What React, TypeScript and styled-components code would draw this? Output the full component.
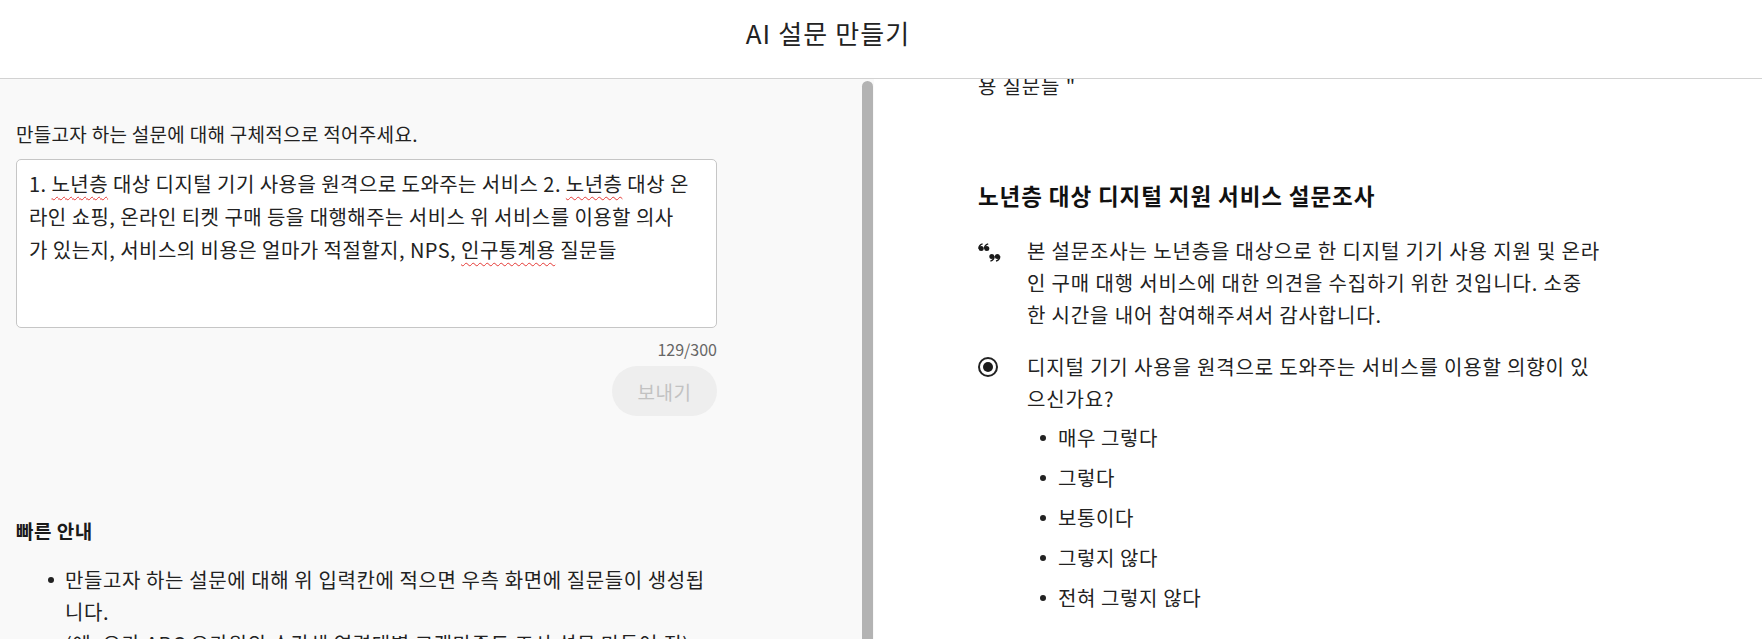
import React from "react";
import styled, { createGlobalStyle } from "styled-components";

const GlobalStyle = createGlobalStyle`
  html, body {
    margin: 0;
    padding: 0;
    overflow: hidden;
    background: #ffffff;
  }
  body {
    font-family: "Noto Sans CJK KR", "Noto Sans", sans-serif;
    color: #222222;
  }
  * { box-sizing: border-box; }
`;

const Page = styled.div`
  display: flex;
  flex-direction: column;
  height: 100vh;
`;

const Header = styled.header`
  flex: none;
  height: 79px;
  display: flex;
  align-items: center;
  justify-content: center;
  padding: 0 106px 13px 0;
  border-bottom: 1px solid #d2d2d2;
  background: #ffffff;
`;

const Title = styled.h1`
  margin: 0;
  font-size: 26px;
  font-weight: 400;
  letter-spacing: 1.1px;
  line-height: 34px;
  color: #222222;
`;

const Main = styled.main`
  flex: 1;
  min-height: 0;
  display: flex;
`;

const LeftPanel = styled.section`
  flex: none;
  width: 874px;
  display: flex;
  background: #f9f9f9;
`;

const LeftScroll = styled.div`
  flex: 1;
  overflow: hidden;
  padding: 41px 0 0 16px;
`;

const FormColumn = styled.div`
  width: 701px;
  display: flex;
  flex-direction: column;
`;

const Label = styled.label`
  font-size: 19px;
  line-height: 28px;
  letter-spacing: 0.3px;
  color: #222222;
`;

const PromptBox = styled.div`
  margin-top: 11px;
  height: 169px;
  padding: 7px 26px 7px 12px;
  background: #ffffff;
  border: 1px solid #c6c6c6;
  border-radius: 5px;
  font-size: 20px;
  line-height: 33px;
  letter-spacing: 0.45px;
  color: #222222;
  outline: none;
`;

const Misspelled = styled.span`
  text-decoration: underline wavy #e53935;
  text-decoration-thickness: 1px;
  text-underline-offset: 4px;
`;

const Counter = styled.div`
  margin-top: 10px;
  text-align: right;
  font-size: 16px;
  line-height: 22px;
  color: #666666;
`;

const ButtonRow = styled.div`
  margin-top: 6px;
  display: flex;
  justify-content: flex-end;
`;

const SendButton = styled.button`
  width: 105px;
  height: 50px;
  border: none;
  border-radius: 25px;
  background: #eeeeee;
  color: #c2c2c2;
  font-family: inherit;
  font-size: 19px;
  letter-spacing: 0.5px;
  cursor: default;
`;

const GuideTitle = styled.h2`
  margin: 102px 0 0;
  font-size: 19px;
  font-weight: 700;
  letter-spacing: 0.5px;
  line-height: 26px;
  color: #1a1a1a;
`;

const GuideList = styled.ul`
  margin: 20px 0 0;
  padding-left: 49px;
  list-style: none;
  font-size: 20px;
  line-height: 32px;
  letter-spacing: 0.6px;
`;

const GuideItem = styled.li`
  position: relative;
  &::before {
    content: "";
    position: absolute;
    left: -17px;
    top: 13px;
    width: 6px;
    height: 6px;
    border-radius: 50%;
    background: #222222;
  }
`;

const Track = styled.div`
  flex: none;
  width: 13px;
  padding: 2px 1px 0 1px;
  display: flex;
`;

const Thumb = styled.div`
  flex: 1;
  background: #b3b3b3;
  border-radius: 6px 6px 0 0;
`;

const RightPanel = styled.section`
  flex: 1;
  overflow: hidden;
  background: #ffffff;
  padding-left: 104px;
`;

const Doc = styled.article`
  width: 623px;
  font-size: 20px;
  line-height: 32px;
  letter-spacing: 0.85px;
  color: #222222;
`;

const Fragment = styled.p`
  margin: -9px 0 0;
`;

const DocTitle = styled.h3`
  margin: 77px 0 0;
  font-size: 22.5px;
  font-weight: 700;
  letter-spacing: 0.9px;
  line-height: 32px;
  color: #111111;
`;

const Row = styled.div<{ $gap: number }>`
  margin-top: ${(p) => p.$gap}px;
  display: grid;
  grid-template-columns: 49px 574px;
`;

const IconCell = styled.div<{ $top: number }>`
  padding-top: ${(p) => p.$top}px;
`;

const RowText = styled.div``;

const Radio = styled.span`
  display: flex;
  align-items: center;
  justify-content: center;
  width: 20px;
  height: 20px;
  border: 2px solid #222222;
  border-radius: 50%;
  &::after {
    content: "";
    width: 10px;
    height: 10px;
    border-radius: 50%;
    background: #1a1a1a;
  }
`;

const Options = styled.ul`
  margin: 7px 0 0;
  padding-left: 31px;
  list-style: none;
  letter-spacing: 0.6px;
`;

const Option = styled.li`
  position: relative;
  margin-bottom: 8px;
  &::before {
    content: "";
    position: absolute;
    left: -18px;
    top: 13px;
    width: 6px;
    height: 6px;
    border-radius: 50%;
    background: #222222;
  }
`;

const QuoteIcon = () => (
  <svg width="23" height="20" viewBox="0 0 23 19" fill="#1a1a1a">
    <circle cx="3.2" cy="5" r="2.5" />
    <circle cx="8.8" cy="5" r="2.5" />
    <path d="M0.9 5.2 Q0.9 1.4 4.6 0.4" stroke="#1a1a1a" strokeWidth="1.5" fill="none" />
    <path d="M6.5 5.2 Q6.5 1.4 10.2 0.4" stroke="#1a1a1a" strokeWidth="1.5" fill="none" />
    <circle cx="13.8" cy="13" r="2.5" />
    <circle cx="19.4" cy="13" r="2.5" />
    <path d="M16.1 12.8 Q16.1 16.6 12.4 17.6" stroke="#1a1a1a" strokeWidth="1.5" fill="none" />
    <path d="M21.7 12.8 Q21.7 16.6 18 17.6" stroke="#1a1a1a" strokeWidth="1.5" fill="none" />
  </svg>
);

const options = ["매우 그렇다", "그렇다", "보통이다", "그렇지 않다", "전혀 그렇지 않다"];

export default function App() {
  return (
    <>
      <GlobalStyle />
      <Page>
        <Header>
          <Title>AI 설문 만들기</Title>
        </Header>
        <Main>
          <LeftPanel>
            <LeftScroll>
              <FormColumn>
                <Label>만들고자 하는 설문에 대해 구체적으로 적어주세요.</Label>
                <PromptBox role="textbox" spellCheck={false}>
                  1. <Misspelled>노년층</Misspelled> 대상 디지털 기기 사용을 원격으로 도와주는 서비스 2.{" "}
                  <Misspelled>노년층</Misspelled> 대상 온라인 쇼핑, 온라인 티켓 구매 등을 대행해주는 서비스 위
                  서비스를 이용할 의사가 있는지, 서비스의 비용은 얼마가 적절할지, NPS,{" "}
                  <Misspelled>인구통계용</Misspelled> 질문들
                </PromptBox>
                <Counter>129/300</Counter>
                <ButtonRow>
                  <SendButton disabled>보내기</SendButton>
                </ButtonRow>
                <GuideTitle>빠른 안내</GuideTitle>
                <GuideList>
                  <GuideItem>
                    만들고자 하는 설문에 대해 위 입력칸에 적으면 우측 화면에 질문들이 생성됩니다.
                    <br />
                    (예: 요가 ABC 요가원의 수강생 연령대별 고객만족도 조사 설문 만들어 줘)
                  </GuideItem>
                  <GuideItem>생성된 질문은 우측 화면에서 자유롭게 수정할 수 있습니다.</GuideItem>
                </GuideList>
              </FormColumn>
            </LeftScroll>
            <Track>
              <Thumb />
            </Track>
          </LeftPanel>
          <RightPanel>
            <Doc>
              <Fragment>용 질문들 "</Fragment>
              <DocTitle>노년층 대상 디지털 지원 서비스 설문조사</DocTitle>
              <Row $gap={24}>
                <IconCell $top={4}>
                  <QuoteIcon />
                </IconCell>
                <RowText>
                  본 설문조사는 노년층을 대상으로 한 디지털 기기 사용 지원 및 온라인 구매 대행 서비스에 대한
                  의견을 수집하기 위한 것입니다. 소중한 시간을 내어 참여해주셔서 감사합니다.
                </RowText>
              </Row>
              <Row $gap={20}>
                <IconCell $top={6}>
                  <Radio />
                </IconCell>
                <RowText>
                  디지털 기기 사용을 원격으로 도와주는 서비스를 이용할 의향이 있으신가요?
                  <Options>
                    {options.map((o) => (
                      <Option key={o}>{o}</Option>
                    ))}
                  </Options>
                </RowText>
              </Row>
            </Doc>
          </RightPanel>
        </Main>
      </Page>
    </>
  );
}
